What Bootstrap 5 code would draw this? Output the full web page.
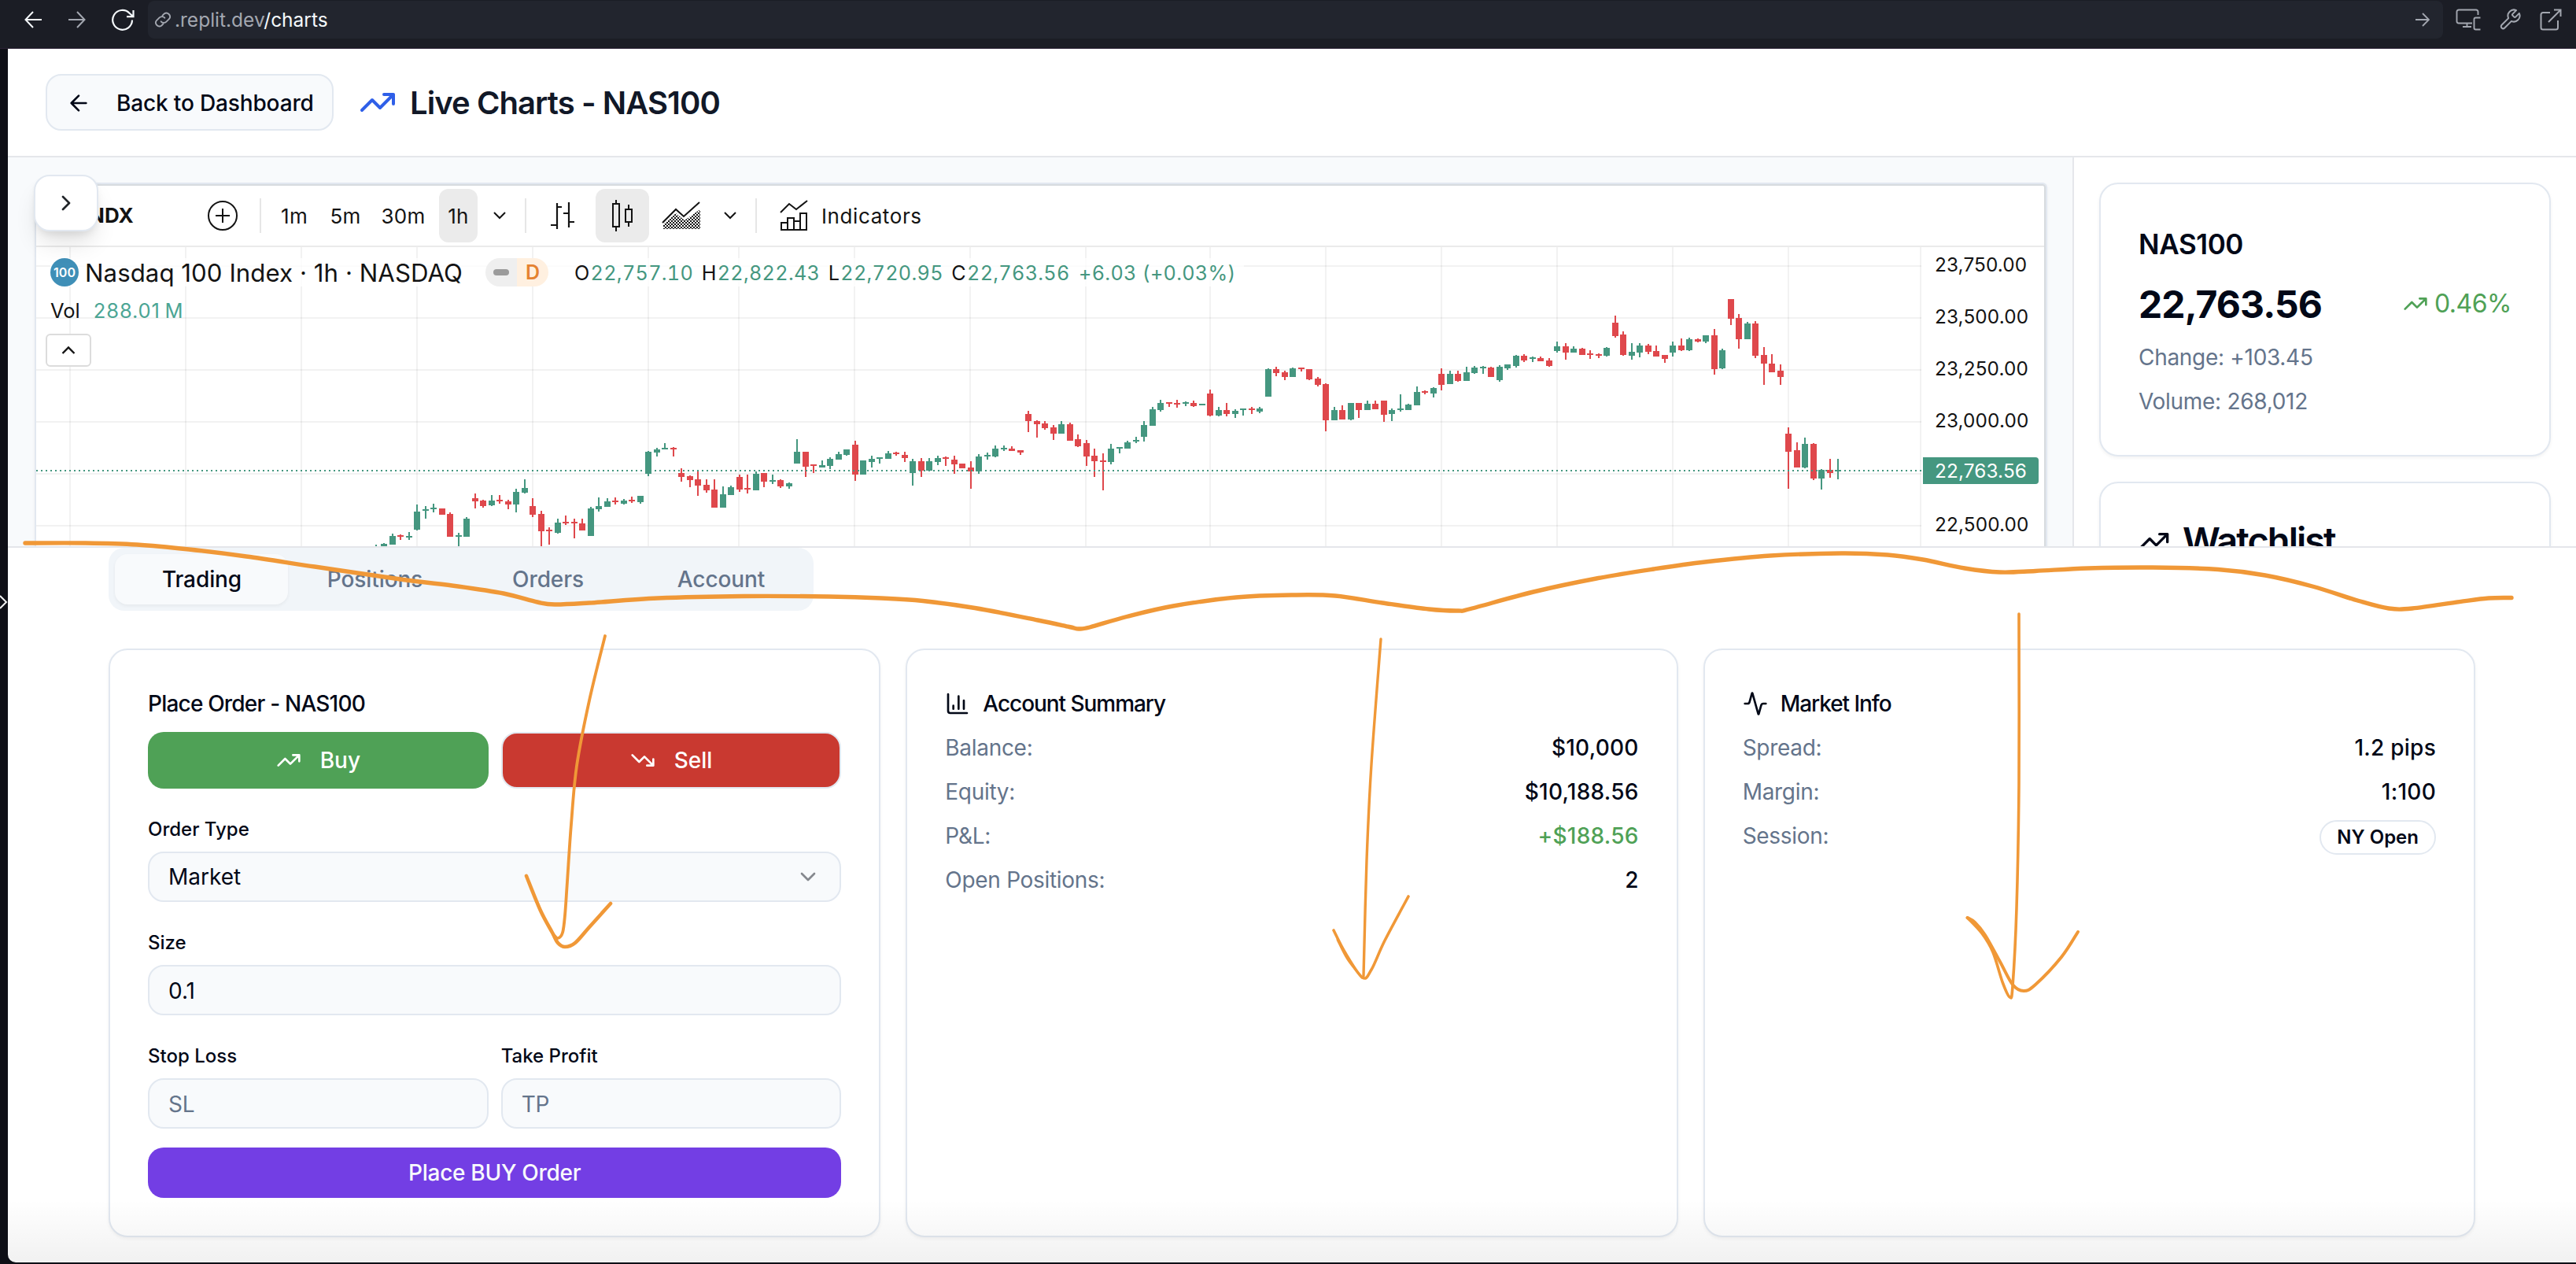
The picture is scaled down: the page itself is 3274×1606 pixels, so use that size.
<!DOCTYPE html>
<html lang="en">
<head>
<meta charset="utf-8">
<meta name="viewport" content="width=device-width, initial-scale=1">
<title>Live Charts - NAS100</title>
<link href="https://cdn.jsdelivr.net/npm/bootstrap@5.3.0/dist/css/bootstrap.min.css" rel="stylesheet">
<style>
:root{--line:#e2e8f0;--ink:#020817;--muted:#64748b;--up:#459780;--down:#df484c}
body{background:#0e0f16;font-family:Inter,"Liberation Sans",sans-serif;font-size:28px;line-height:40px;color:var(--ink);width:3274px;height:1606px;overflow:hidden;position:relative}
svg{display:block;flex:none}
.ico{fill:none;stroke:currentColor;stroke-width:2;stroke-linecap:round;stroke-linejoin:round}
.fw-m{font-weight:500;letter-spacing:.25px}
/* browser bar */
.browserbar{height:62px;background:#1b1d25;padding:1px 18px 0 31px;color:#f5f9fc;border-bottom:1px solid #2b2235}
.browserbar .dim{color:#a3a7b0}
.urlbox{height:48px;width:2919px;margin-left:17px;background:#22252e;border-radius:8px;padding:0 17px 0 8px;font-size:24.5px;line-height:48px}
.nav-back{margin-top:13px}
.nav-fwd{margin:13px 0 0 34px}
.nav-reload{margin:10px 0 0 32px}
.tool-a{margin:10px 0 0 16px}.tool-b{margin:9px 0 0 22px}.tool-c{margin:10px 0 0 23px}
.edge-handle{left:0;top:753px}
/* page */
.page{margin-left:10px;height:1542px;background:#fff;border-bottom-left-radius:10px;overflow:hidden}
.page-head{height:138px;border-bottom:2px solid #e5e7eb;padding-left:48px}
.btn-back{height:72px;width:366px;border:2px solid var(--line);border-radius:20px;background:#f8fafc;font-size:28px;font-weight:500;padding:1px 24px 0;color:var(--ink);letter-spacing:-.15px}
.btn-back span{margin-left:32px}
.page-title{font-size:40px;font-weight:600;color:#111827;line-height:56px;letter-spacing:-.92px;padding:2px 0 0 1px}
.workspace{height:496px;border-bottom:2px solid #e4e6ea;overflow:hidden}
.chart-pane{width:2624px;background:#f8fafc;padding:32px 32px 0 34px}
.chart-frame{height:600px;border:2px solid var(--line);border-radius:6px;box-shadow:0 2px 4px rgba(0,0,0,.05)}
.tv{height:596px;border:2px solid #d7dbdf;border-left-width:0;border-radius:4px;background:#fff;color:#131313}
.tv-bar{height:78px;border-bottom:2px solid #ebebeb;font-size:26px;letter-spacing:.2px}
.tv-sep{width:2px;height:44px;background:#e6e6e6}
.tv-on{background:#ebebeb;border-radius:12px;height:68px}
.tv-int{text-align:center;padding-top:2px}
.flyout{left:43px;top:222px;width:82px;height:72px;border:2px solid var(--line);border-radius:20px;background:#fff;box-shadow:0 20px 30px -6px rgba(0,0,0,.12),0 6px 12px -4px rgba(0,0,0,.1)}
.plot{width:2398px}
.axis{width:152px;margin-top:-11px;font-size:24.3px;letter-spacing:.15px;line-height:67px}
.axis div{height:66px;padding-left:15px}
.axis .tagslot{padding:14px 0 0}
.axis .pricetag{display:block;width:147px;height:34px;line-height:34px;padding-left:15px;background:var(--up);color:#fff;border-radius:0 4px 4px 0}
.legend{left:18px;top:14px}
.legend-row{height:36px;background:rgba(255,255,255,.75)}
.sym{width:36px;height:36px;border-radius:50%;background:#3f8fb7;color:#fff;font-size:16px;font-weight:600;text-align:center;line-height:36px}
.sym-name{font-size:31.2px;width:509px;padding:2px 0 0 8px;white-space:nowrap;letter-spacing:.06px}
.status{width:80px;height:36px;border-radius:18px;overflow:hidden}
.status span{width:40px;height:36px}
.st-a{background:#efefef}.st-a i{width:20px;height:8px;border-radius:4px;background:#9b9b9b}
.st-b{background:#fff0e0;color:#e58230;font-weight:600;font-size:25px}
.ohlc{font-size:25.2px;letter-spacing:.3px;margin-left:33px;padding-top:2px;white-space:nowrap;font-variant-numeric:tabular-nums}
.ohlc b{font-weight:400;color:var(--up);margin-left:1px}
.ohlc>span{margin-right:10.5px}
.vol{font-size:25.5px;height:40px;line-height:40px;margin-top:11px}
.vol b{font-weight:400;color:#4ba594;letter-spacing:.9px;margin-left:17px}
.collapse-btn{width:58px;height:42px;border:2px solid #dcdcdc;border-radius:6px;background:#fff;margin:9px 0 0 -6px}
/* quote column */
.quotes{width:640px;border-left:2px solid #e5e7eb;padding:32px 32px 0 32px;gap:32px;background:#fff}
.panel{border:2px solid var(--line);border-radius:24px;background:#fff;padding:48px;box-shadow:0 2px 4px rgba(0,0,0,.05)}
.q-name{font-size:35px;font-weight:600;letter-spacing:-.4px;line-height:56px}
.q-price{font-size:48px;font-weight:700;line-height:64px;letter-spacing:-.9px;padding-top:1px;margin-bottom:-1px}
.q-pct{font-size:32px;color:#4fa156;letter-spacing:-.5px}
.text-mute{color:var(--muted);letter-spacing:-.3px}
.watch{font-size:47px;font-weight:600;letter-spacing:-2px;line-height:50px}
/* trading panel */
.desk{padding:0 128px}
.tabstrip{width:896px;height:80px;background:#f1f5f9;border-radius:20px;padding:8px;color:var(--muted);font-weight:500}
.tabstrip>div{flex:1;line-height:65px;text-align:center;letter-spacing:-.1px;padding-left:1px}
.tabstrip .on{background:#f8fafc;color:var(--ink);border-radius:16px;box-shadow:0 2px 4px rgba(0,0,0,.05)}
.deck{margin-top:48px;gap:32px;height:748px}
.deck .panel{flex:1 1 0;min-width:0}
.p-title{font-weight:500;font-size:28px;letter-spacing:-.8px;line-height:41px;height:40px;margin-bottom:16px}
.p-title.gap-3{letter-spacing:-1.05px}
.side-btn{width:calc(50% - 8px);height:72px;border-radius:20px;color:#fff;font-weight:500}
.buy{background:#4fa156}.sell{background:#c93930;border:2px solid var(--line)}
.f-label{font-size:24px;line-height:24px;font-weight:500;margin:40px 0 16px;display:block}
.field{height:64px;border:2px solid var(--line);border-radius:20px;background:#f8fafc;padding:0 24px;line-height:62px}
.chev{color:#85888e}
.place{height:64px;border-radius:20px;background:#733ee4;color:#f8fafc;font-weight:500;margin-top:24px;line-height:64px;text-align:center;letter-spacing:-.28px}
.kv{height:40px;margin-bottom:16px}
.gain{color:#4fa156}
.pill{border:2px solid var(--line);border-radius:22px;height:44px;line-height:40px;padding:0 20px;font-size:24px;font-weight:600}
.vignette{left:10px;right:0;top:1524px;height:80px;background:linear-gradient(rgba(0,0,0,0),rgba(0,0,0,.055));border-bottom-left-radius:10px}
.ink{left:0;top:0;pointer-events:none}
.ink path{fill:none;stroke:#f09837;stroke-linecap:round;stroke-linejoin:round}
/* toolbar spacing */
.tv-ticker{width:217px;padding:0 0 0 67px}
.ml-5{margin-left:5px}.ml-16{margin-left:16px}.ml-20{margin-left:20px}.ml-24{margin-left:24px}.ml-26{margin-left:26px}.ml-27{margin-left:27px}.ml-29{margin-left:29px}.ml-30{margin-left:30px}
.w-64{width:64px;margin-left:10px}.w-66{width:66px}.w-81{width:81px}.w-49{width:49px}.w-68{width:68px}
.ind-name{margin-left:17px;padding-top:2px;letter-spacing:.6px}
.title-ico{color:#2f5fe8;margin-left:32px}
</style>
<script src="https://cdn.jsdelivr.net/npm/bootstrap@5.3.0/dist/js/bootstrap.bundle.min.js"></script>
</head>
<body>
<svg width="0" height="0" class="position-absolute">
  <symbol id="up" viewBox="0 0 24 24"><path d="M22 7 13.5 15.5 8.5 10.5 2 17M16 7h6v6"/></symbol>
  <symbol id="dn" viewBox="0 0 24 24"><path d="M22 17 13.5 8.5 8.5 13.5 2 7M16 17h6v-6"/></symbol>
  <symbol id="left" viewBox="0 0 24 24"><path d="M12 19 5 12l7-7M19 12H5"/></symbol>
</svg>

<nav class="browserbar d-flex align-items-start">
  <svg class="nav-back" width="22" height="22" viewBox="0 0 22 22" fill="none" stroke="currentColor" stroke-width="2"><path d="M11 1 1.500 11 11 21M2 11h20"/></svg>
  <svg class="dim nav-fwd" width="22" height="22" viewBox="0 0 22 22" fill="none" stroke="currentColor" stroke-width="2"><path d="M11 1l9.500 10L11 21M20 11H0"/></svg>
  <svg class="nav-reload" width="30" height="28" viewBox="0 0 30 28" fill="none" stroke="currentColor" stroke-width="2.200"><path d="M27 14.500A12.400 12.400 0 1 1 23.500 5.700L28 9.800M28.500 2v8.200H20"/></svg>
  <div class="urlbox d-flex align-items-center">
    <svg class="dim" width="22" height="22" viewBox="0 0 24 24" fill="none" stroke="currentColor" stroke-width="2" stroke-linecap="round"><path d="M9.500 14.500a5 5 0 0 0 7.300.400l4-4a5 5 0 0 0-7-7l-2.300 2.200M14.500 9.500a5 5 0 0 0-7.300-.400l-4 4a5 5 0 0 0 7 7l2.300-2.200"/></svg>
    <span class="ms-1"><span class="dim">.replit.dev</span>/charts</span>
    <svg class="dim ms-auto" width="18" height="18" viewBox="0 0 18 18" fill="none" stroke="currentColor" stroke-width="1.800"><path d="M9 1l8 8-8 8M17 9H0"/></svg>
  </div>
  <svg class="dim tool-a" width="32" height="28" viewBox="0 0 32 28" fill="none" stroke="currentColor" stroke-width="1.900"><path d="M28.500 8V4a2.500 2.500 0 0 0-2.500-2.500H4A2.500 2.500 0 0 0 1.500 4v12A2.500 2.500 0 0 0 4 18.500h17M9 23h11M14.500 19v4M31.500 11.500h-6a2 2 0 0 0-2 2v11a2 2 0 0 0 2 2h6"/></svg>
  <svg class="dim tool-b" width="30" height="30" viewBox="0 0 24 24" fill="none" stroke="currentColor" stroke-width="1.600" stroke-linejoin="round"><path d="M14.700 6.300a1 1 0 0 0 0 1.400l1.600 1.600a1 1 0 0 0 1.400 0l3.770-3.770a6 6 0 0 1-7.940 7.940l-6.910 6.910a2.120 2.120 0 0 1-3-3l6.910-6.910a6 6 0 0 1 7.940-7.940z"/></svg>
  <svg class="dim tool-c" width="28" height="28" viewBox="0 0 28 28" fill="none" stroke="currentColor" stroke-width="2"><path d="M13 5H4a2.500 2.500 0 0 0-2.500 2.500V24A2.500 2.500 0 0 0 4 26.500h16.500A2.500 2.500 0 0 0 23 24v-9M18 1.500h8.500V10M26.500 1.500 11 17"/></svg>
</nav>

<main class="page d-flex flex-column">
  <header class="page-head d-flex align-items-center">
    <button class="btn btn-back d-flex align-items-center">
      <svg class="ico" width="32" height="32"><use href="#left"/></svg><span class="text-nowrap">Back to Dashboard</span>
    </button>
    <svg class="ico title-ico" width="48" height="48"><use href="#up"/></svg>
    <h1 class="page-title mb-0 ms-3">Live Charts - NAS100</h1>
  </header>

  <section class="workspace d-flex">
    <div class="chart-pane">
      <div class="chart-frame">
        <div class="tv">
          <div class="tv-bar d-flex align-items-center">
            <span class="fw-bold tv-ticker">NDX</span>
            <svg width="40" height="40" viewBox="0 0 40 40" fill="none" stroke="#131313" stroke-width="2"><circle cx="20" cy="20" r="18"/><path d="M20 11v18M11 20h18"/></svg>
            <span class="tv-sep ml-27"></span>
            <span class="tv-int w-64">1m</span>
            <span class="tv-int w-66">5m</span>
            <span class="tv-int w-81">30m</span>
            <span class="tv-int tv-on w-49 ml-5 d-flex align-items-center justify-content-center">1h</span>
            <svg class="ml-20" width="16" height="10" viewBox="0 0 16 10" fill="none" stroke="#131313" stroke-width="2"><path d="M1 1l7 7 7-7"/></svg>
            <span class="tv-sep ml-24"></span>
            <svg class="ml-30" width="32" height="36" viewBox="0 0 32 36" fill="none" stroke="#131313" stroke-width="2.200"><path d="M1 30h8M9 35V2M9 7h6M17 15h7M24 1v32M24 26h7"/></svg>
            <span class="tv-on ml-26 w-68 d-flex align-items-center justify-content-center">
              <svg width="28" height="40" viewBox="0 0 28 40" fill="none" stroke="#131313" stroke-width="2"><path d="M6 0v5M6 34v6M2 5h8v29H2zM22 6v6M22 28v6M18 12h8v16h-8z"/></svg>
            </span>
            <svg class="ml-16" width="50" height="36" viewBox="0 0 50 36"><defs><pattern id="dots" width="4" height="4" patternUnits="userSpaceOnUse"><path d="M0 0h2v2H0zM2 2h2v2H2z" fill="#131313"/></pattern></defs><path d="M2 35V29L18 15l11 9L49 10v25z" fill="url(#dots)"/><path d="M1 27 18 10l10 9L48 1" fill="none" stroke="#131313" stroke-width="2"/></svg>
            <svg class="ml-29" width="16" height="10" viewBox="0 0 16 10" fill="none" stroke="#131313" stroke-width="2"><path d="M1 1l7 7 7-7"/></svg>
            <span class="tv-sep ml-24"></span>
            <svg class="ml-29" width="36" height="40" viewBox="0 0 36 40" fill="none" stroke="#131313" stroke-width="2"><path d="M1 16 12 5l9 7L35 1M2 29h8v9H2zM10 38V23h8v15M18 27h8M2 38h32V17h-8v21"/></svg>
            <span class="ind-name">Indicators</span>
          </div>
          <div class="d-flex position-relative">
            <svg id="plot" class="plot" height="382" viewBox="46 314 2398 382"></svg>
            <div class="axis">
              <div>23,750.00</div><div>23,500.00</div><div>23,250.00</div><div>23,000.00</div>
              <div class="tagslot"><span class="pricetag">22,763.56</span></div>
              <div>22,500.00</div>
            </div>
            <div class="legend position-absolute">
              <div class="legend-row d-flex align-items-center">
                <span class="sym">100</span>
                <span class="sym-name">Nasdaq 100 Index · 1h · NASDAQ</span>
                <span class="status d-flex ms-2"><span class="st-a d-flex align-items-center justify-content-center"><i></i></span><span class="st-b d-flex align-items-center justify-content-center">D</span></span>
                <span class="ohlc"><span>O<b>22,757.10</b></span><span>H<b>22,822.43</b></span><span>L<b>22,720.95</b></span><span>C<b>22,763.56</b></span><span><b>+6.03 (+0.03%)</b></span></span>
              </div>
              <div class="vol">Vol<b>288.01&#8201;M</b></div>
              <div class="collapse-btn d-flex align-items-center justify-content-center"><svg width="18" height="12" viewBox="0 0 18 12" fill="none" stroke="#131313" stroke-width="2.400"><path d="M1.500 10 9 2.500l7.500 7.500"/></svg></div>
            </div>
          </div>
        </div>
      </div>
    </div>
    <aside class="quotes d-flex flex-column">
      <div class="panel">
        <div class="q-name">NAS100</div>
        <div class="d-flex justify-content-between align-items-center mt-3">
          <span class="q-price">22,763.56</span>
          <span class="q-pct d-flex align-items-center gap-2"><svg class="ico" width="32" height="32"><use href="#up"/></svg>0.46%</span>
        </div>
        <div class="text-mute mt-3">Change: +103.45</div>
        <div class="text-mute mt-3">Volume: 268,012</div>
      </div>
      <div class="panel">
        <div class="watch d-flex align-items-center gap-3"><svg class="ico" width="40" height="40"><use href="#up"/></svg>Watchlist</div>
      </div>
    </aside>
  </section>

  <section class="desk">
    <div class="tabstrip d-flex"><div class="on">Trading</div><div>Positions</div><div>Orders</div><div>Account</div></div>
    <div class="deck d-flex">
      <div class="panel">
        <div class="p-title">Place Order - NAS100</div>
        <div class="d-flex gap-3">
          <div class="side-btn buy d-flex align-items-center justify-content-center"><svg class="ico me-4" width="32" height="32"><use href="#up"/></svg>Buy</div>
          <div class="side-btn sell d-flex align-items-center justify-content-center"><svg class="ico me-4" width="32" height="32"><use href="#dn"/></svg>Sell</div>
        </div>
        <label class="f-label">Order Type</label>
        <div class="field d-flex align-items-center justify-content-between">Market<svg class="ico chev" width="32" height="32" viewBox="0 0 24 24"><path d="m6 9 6 6 6-6"/></svg></div>
        <label class="f-label">Size</label>
        <div class="field">0.1</div>
        <div class="d-flex gap-3">
          <div class="flex-fill w-50"><label class="f-label">Stop Loss</label><div class="field text-mute">SL</div></div>
          <div class="flex-fill w-50"><label class="f-label">Take Profit</label><div class="field text-mute">TP</div></div>
        </div>
        <div class="place">Place BUY Order</div>
      </div>
      <div class="panel">
        <div class="p-title d-flex gap-3"><svg class="ico mt-1" width="32" height="32" viewBox="0 0 24 24"><path d="M3 3v16a2 2 0 0 0 2 2h16M18 17V9M13 17V5M8 17v-3"/></svg>Account Summary</div>
        <div class="kv d-flex justify-content-between"><span class="text-mute">Balance:</span><span class="fw-m">$10,000</span></div>
        <div class="kv d-flex justify-content-between"><span class="text-mute">Equity:</span><span class="fw-m">$10,188.56</span></div>
        <div class="kv d-flex justify-content-between"><span class="text-mute">P&amp;L:</span><span class="fw-m gain">+$188.56</span></div>
        <div class="kv d-flex justify-content-between"><span class="text-mute">Open Positions:</span><span class="fw-m">2</span></div>
      </div>
      <div class="panel">
        <div class="p-title d-flex gap-3"><svg class="ico mt-1" width="32" height="32" viewBox="0 0 24 24"><path d="M22 12h-2.480a2 2 0 0 0-1.930 1.460l-2.350 8.360a.25.25 0 0 1-.48 0L9.240 2.180a.25.25 0 0 0-.48 0l-2.350 8.360A2 2 0 0 1 4.490 12H2"/></svg>Market Info</div>
        <div class="kv d-flex justify-content-between"><span class="text-mute">Spread:</span><span class="fw-m">1.2 pips</span></div>
        <div class="kv d-flex justify-content-between"><span class="text-mute">Margin:</span><span class="fw-m">1:100</span></div>
        <div class="kv d-flex justify-content-between"><span class="text-mute">Session:</span><span class="pill">NY Open</span></div>
      </div>
    </div>
  </section>
</main>

<button class="btn flyout position-absolute d-flex align-items-center justify-content-center"><svg class="ico" width="32" height="32" viewBox="0 0 24 24"><path d="m9 18 6-6-6-6"/></svg></button>
<div class="vignette position-absolute"></div>
<svg class="edge-handle position-absolute" width="10" height="24" viewBox="0 0 10 24" fill="none" stroke="#f1f1f1" stroke-width="2"><path d="M0 4l8 8-8 8"/></svg>
<svg class="ink position-absolute" width="3274" height="1606" id="ink"></svg>

<script>
// Each candle: high, body top, body bottom, low (y pixels), then g = rising / r = falling
const candles = `692 696 700 700 g|690 691 700 700 g|678 681 692 692 g|679 680 682 686 r|676 681 683 686 g|641 650 673 674 g|643 647 649 659 g|640 645 647 651 g|646 646 654 654 r|651 653 682 682 r|677 680 682 696 g|657 659 682 682 g|627 633 637 646 r|635 636 643 645 r|629 636 642 643 g|629 635 637 640 r|635 637 641 647 r|621 625 641 651 g|609 620 626 627 g|633 643 654 657 r|649 653 675 696 r|670 673 675 692 r|659 664 677 678 g|655 663 665 667 r|659 663 665 684 r|659 665 674 674 r|644 646 681 681 g|632 643 647 650 g|633 637 644 644 g|632 636 638 641 r|634 636 640 641 g|631 635 637 639 r|630 630 638 640 g|573 574 602 605 g|569 571 575 580 g|563 569 571 571 g|568 569 571 580 r|595 601 606 612 r|604 605 610 619 r|598 609 617 630 r|609 616 623 626 r|609 622 645 645 r|618 628 645 645 g|617 619 629 629 g|603 606 622 625 r|603 620 622 627 r|599 602 623 623 g|601 601 612 619 r|603 610 612 615 g|609 610 618 620 r|613 614 618 621 g|558 574 589 589 g|574 574 593 606 r|590 590 592 601 r|585 591 594 594 g|581 583 592 596 g|574 577 584 584 g|571 571 578 579 g|560 565 603 611 r|585 585 603 603 g|579 583 587 594 g|581 581 583 589 g|573 576 583 583 g|574 575 577 579 r|574 578 582 587 r|583 586 601 617 g|582 586 598 606 r|582 586 598 599 g|579 582 587 591 g|580 581 583 592 r|579 584 590 602 r|589 589 595 595 r|586 594 599 621 r|577 580 599 602 g|575 578 580 584 g|566 570 580 581 g|566 569 571 573 g|567 570 573 573 r|572 572 575 578 r|522 526 535 549 r|534 535 539 556 r|535 538 544 546 r|540 543 551 559 r|535 539 551 551 g|537 539 560 560 r|552 558 567 568 r|559 563 580 592 r|570 579 586 606 r|576 585 587 623 r|564 570 587 590 g|568 568 570 576 g|560 562 570 570 g|555 559 561 563 g|535 540 555 561 g|517 520 541 541 g|508 512 521 523 g|511 511 513 517 r|508 512 514 518 r|510 511 513 516 g|509 512 516 517 r|513 513 515 515 g|495 500 528 529 r|517 521 528 529 g|512 521 526 529 r|520 522 526 531 g|519 519 521 528 g|517 519 521 526 r|517 519 523 525 g|468 469 504 504 g|466 469 474 478 r|471 473 479 483 r|467 468 479 479 g|467 467 469 472 r|469 469 482 483 r|479 481 489 491 r|487 488 534 548 r|517 521 534 534 g|515 521 533 533 r|512 512 533 534 g|512 512 521 531 r|509 513 521 521 g|509 513 520 520 r|509 509 527 536 r|519 521 526 535 g|501 519 521 523 g|513 514 521 521 g|491 498 515 515 g|496 497 499 501 r|492 493 500 505 g|468 475 489 496 r|471 475 488 488 g|471 475 484 485 r|466 473 484 484 g|465 467 474 475 g|465 466 468 475 g|466 467 479 479 r|464 466 483 485 g|463 463 468 470 g|451 452 465 467 g|450 452 458 460 r|453 454 456 460 g|453 455 459 459 r|455 458 465 466 r|434 440 446 448 g|436 440 448 457 r|440 443 448 448 g|442 443 451 451 r|445 449 451 456 r|449 450 452 455 r|441 442 452 453 g|401 410 427 429 r|421 425 451 452 r|436 447 452 457 g|436 439 448 454 g|437 439 447 450 r|439 446 453 453 r|451 451 456 461 r|434 439 448 453 g|430 439 445 446 r|429 431 445 446 g|430 431 434 435 r|426 426 434 436 g|418 426 469 476 r|443 445 468 469 g|380 380 405 413 r|399 404 431 443 r|409 411 431 431 g|408 411 452 455 r|441 451 462 489 r|450 462 473 473 r|463 471 479 489 r|543 551 574 621 r|562 572 594 594 r|556 564 594 595 g|563 564 608 610 r|596 597 608 622 g|583 597 601 607 r|583 597 599 609 g`.split('|');
let out = '';
const rect = (x, y, w, h, f) => `<rect x="${x}" y="${y}" width="${w}" height="${h}" fill="${f}"/>`;
[89,236,383,530,677,824,939,1086,1233,1380,1538,1685,1832,1979,2126,2273,2441].forEach(x => out += rect(x - 1, 314, 2, 382, 'rgba(40,40,40,.06)'));
[338,404,470,536,602,668].forEach(y => out += rect(46, y - 1, 2396, 2, 'rgba(40,40,40,.06)'));
candles.forEach((c, i) => {
  const [h, t, b, l, k] = c.split(' '), x = Math.round(530 + (i - 5) * 10.5), f = k === 'g' ? '#459780' : '#df484c';
  out += rect(x - 1, h, 2, l - h, f) + rect(x - 4, t, 8, b - t, f);
});
out += '<path d="M46 598H2442" stroke="#459780" stroke-width="2" stroke-dasharray="2 4"/>';
document.getElementById('plot').innerHTML = out;

// Freehand strokes: smooth curve through the sampled points
const strokes = [
 [5.4,'32,690 109,690 174,692 240,698 313,707 400,720 509,736 582,745 640,754 683,765 705,768 749,766 836,760 945,757.500 1054,758 1120,760 1173,763.500 1239,772.500 1319,788 1359,796.500 1371,799 1385,797 1432,783.500 1491,770 1571,759 1644,756 1697,757 1757,766 1816,774 1853,776 1869,773.500 1949,752 2029,735 2102,723 2167,714 2250,706 2340,703 2399,705 2444,711 2497,722 2542,727 2587,725.500 2654,722 2736,721 2819,723.500 2879,731 2939,745 2998,763.500 3036,773 3066,773 3126,764.600 3163,760 3192,759.500'],
 [3.8,'769,808 749,890 733,973 726,1047 721,1120 718,1163 715,1185 709,1192 703,1187'],
 [4.6,'669,1113 687,1157 702,1185 709,1198 718,1203 731,1198 749,1178 776,1148'],
 [3.4,'1755,812 1743,971 1737,1093 1733,1240'],
 [3.6,'1695,1182 1710,1211 1731.500,1242 1743,1232 1760,1195 1790,1139'],
 [3,'1700,1194 1713,1219 1731,1242'],
 [3.6,'2566,780 2566,996 2563,1154 2558,1253 2554.500,1267 2545.500,1249 2533,1210 2519,1186 2500.500,1166'],
 [4,'2500.500,1166 2510,1172 2523,1188 2542,1222 2558,1251 2572,1259 2587,1251 2620,1216 2641,1184']
];
document.getElementById('ink').innerHTML = strokes.map(([w, s]) => {
  const p = s.split(' ').map(q => q.split(',').map(Number));
  let d = 'M' + p[0];
  for (let i = 0; i < p.length - 1; i++) {
    const a = p[i - 1] || p[i], b = p[i], c = p[i + 1], e = p[i + 2] || c;
    d += `C${b[0] + (c[0] - a[0]) / 6},${b[1] + (c[1] - a[1]) / 6} ${c[0] - (e[0] - b[0]) / 6},${c[1] - (e[1] - b[1]) / 6} ${c}`;
  }
  return `<path d="${d}" stroke-width="${w}"/>`;
}).join('');
</script>
</body>
</html>
